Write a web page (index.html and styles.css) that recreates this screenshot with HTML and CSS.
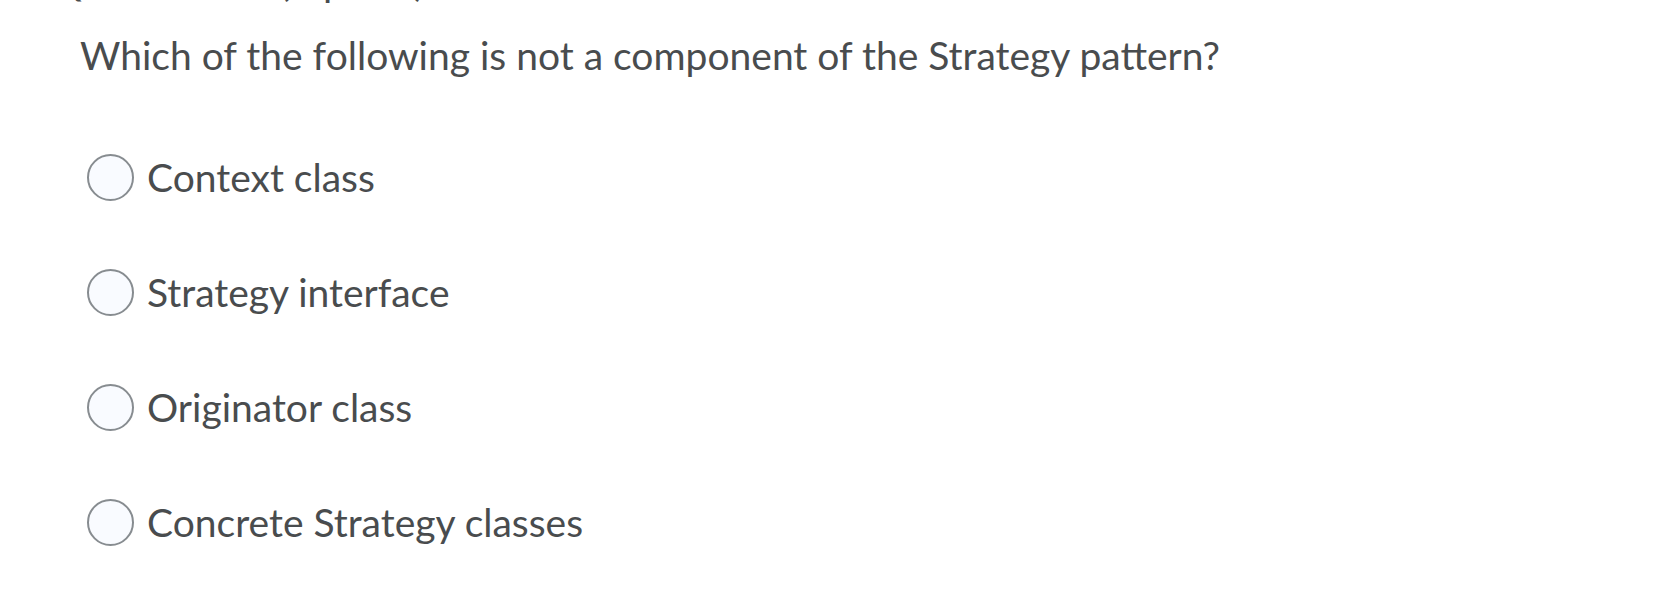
FILE: index.html
```html
<!DOCTYPE html>
<html lang="en">
<head>
<meta charset="utf-8">
<title>Question</title>
<link rel="stylesheet" href="styles.css">
</head>
<body>
<div class="page">
  <div class="q-header">Question 15 (1 point)</div>
  <div class="q-text">Which of the following is not a component of the Strategy pattern?</div>
  <div class="options">
    <label class="option"><span class="radio"></span><span class="opt-text">Context class</span></label>
    <label class="option"><span class="radio"></span><span class="opt-text">Strategy interface</span></label>
    <label class="option"><span class="radio"></span><span class="opt-text">Originator class</span></label>
    <label class="option"><span class="radio"></span><span class="opt-text">Concrete Strategy classes</span></label>
  </div>
</div>
</body>
</html>
```
FILE: styles.css
```css
html, body {
  margin: 0;
  padding: 0;
  background: #ffffff;
}
body {
  font-family: Lato, "Open Sans", sans-serif;
  color: #494c4e;
  overflow: hidden;
}
.page {
  padding-left: 82px;
}
.q-header {
  font-size: 40px;
  line-height: 48px;
  height: 48px;
  margin-top: -43px;
  margin-left: -32px;
  white-space: nowrap;
}
.q-text {
  font-size: 39px;
  line-height: 48px;
  margin-top: 26px;
  margin-left: -2px;
  white-space: nowrap;
}
.options {
  display: flex;
  flex-direction: column;
  gap: 67px;
  margin-top: 74px;
}
.option {
  display: flex;
  align-items: center;
  height: 48px;
  gap: 13px;
}
.radio {
  box-sizing: border-box;
  width: 47px;
  height: 47px;
  margin-left: 5px;
  border: 2px solid #878c90;
  border-radius: 50%;
  background: #f9fbff;
  flex: none;
}
.opt-text {
  font-size: 39px;
  line-height: 48px;
  white-space: nowrap;
}
```
